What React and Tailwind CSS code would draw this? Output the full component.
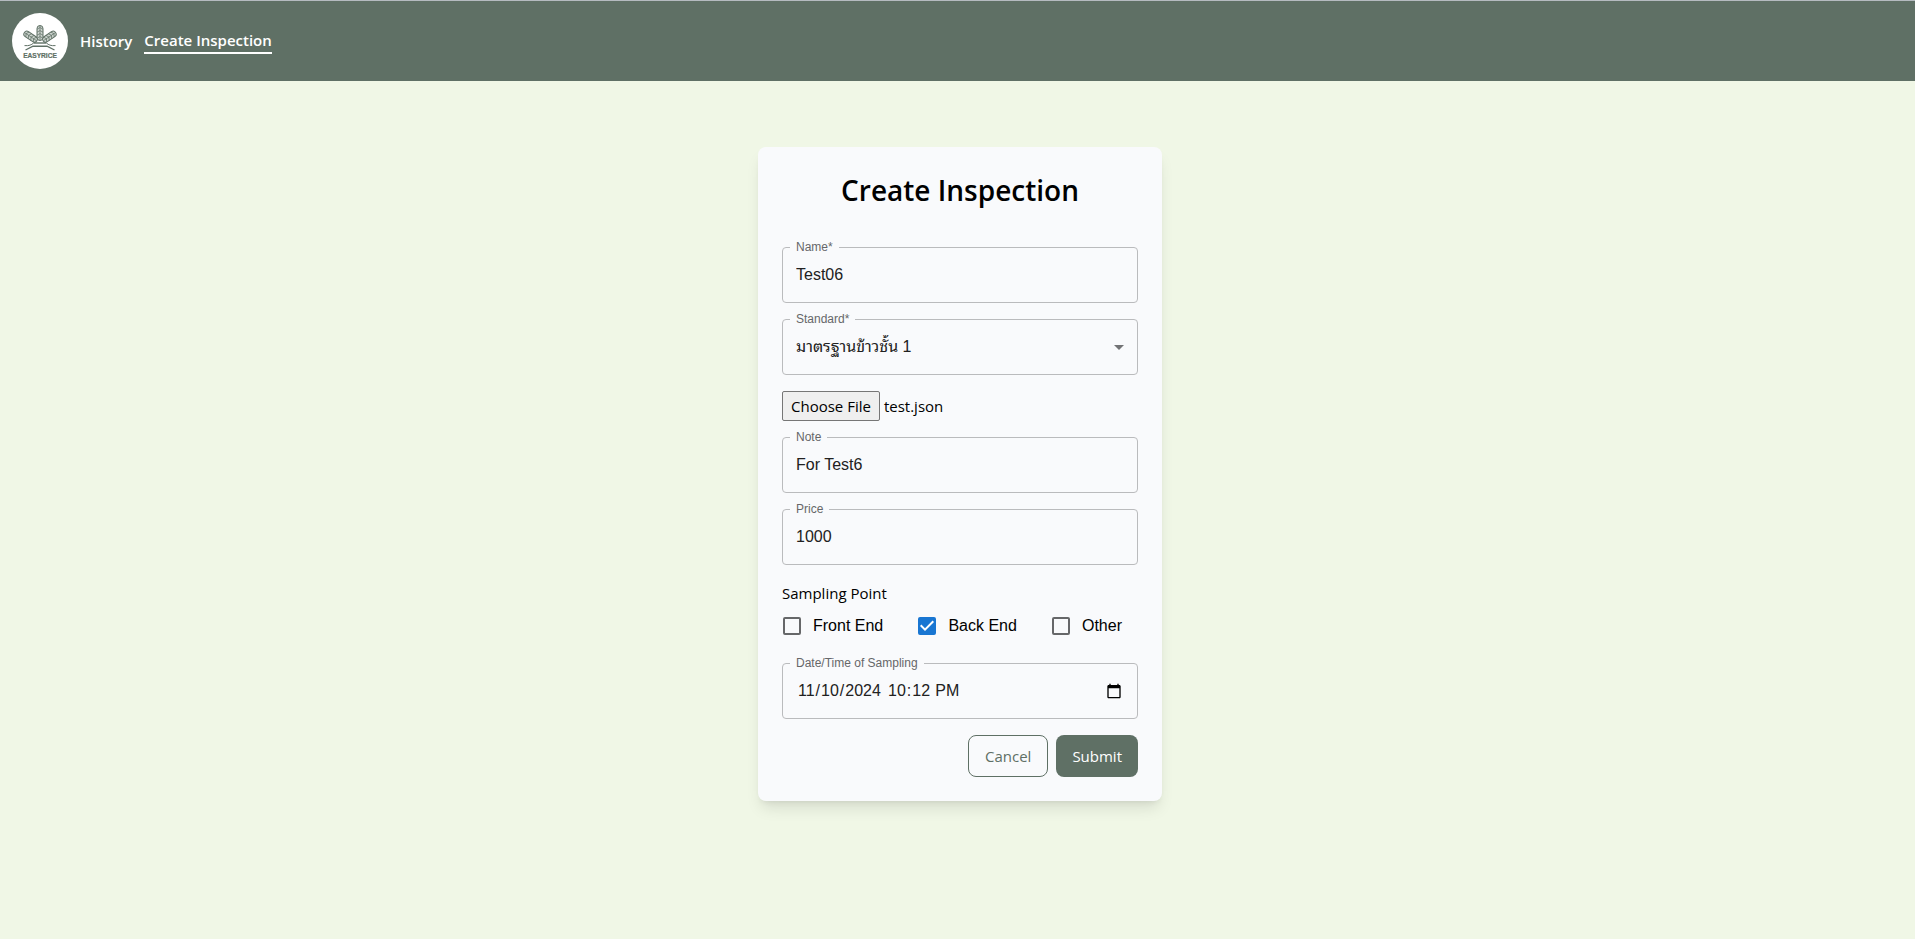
import { useEffect, useRef, useState } from "react";

function Ear({ transform }) {
  return (
    <g transform={transform} fill="none" stroke="#5f7065" strokeWidth="0.7">
      <rect x="-3" y="-14.5" width="6" height="15" rx="3" fill="#ccd3ce" strokeWidth="1" />
      <path d="M0 -14V0M-3 -10.8L0 -12.4L3 -10.8M-3 -7.8L0 -9.4L3 -7.8M-3 -4.8L0 -6.4L3 -4.8M-3 -1.8L0 -3.4L3 -1.8" />
    </g>
  );
}

function Logo() {
  return (
    <svg viewBox="0 0 56 56" className="size-14 shrink-0" role="img" aria-label="Easyrice">
      <circle cx="28" cy="28" r="28" fill="#fff" />
      <Ear transform="translate(24.4 27.6) rotate(-56)" />
      <Ear transform="translate(31.6 27.6) rotate(56)" />
      <Ear transform="translate(28 27)" />
      <g fill="none" stroke="#5f7065">
        <path d="M21.5 30H34.5" strokeWidth="1.4" />
        <path d="M12.5 32.6C17 33 19.5 32 21.5 30M43.5 32.6C39 33 36.5 32 34.5 30" strokeWidth="1" />
        <path d="M13.5 37L21 33.2H35L42.5 37" strokeWidth="1.4" />
      </g>
      <text
        x="28"
        y="44.6"
        textAnchor="middle"
        fontSize="6.6"
        stroke="#5f7065"
        strokeWidth="0.2"
        className="fill-[#5f7065] font-['Liberation_Sans',sans-serif] font-bold"
      >
        EASYRICE
      </text>
    </svg>
  );
}

function Field({ id, label, children }) {
  return (
    <div className="relative">
      <label
        htmlFor={id}
        className="absolute -top-2 left-2 bg-[#f9fafc] px-1.5 font-['Liberation_Sans',sans-serif] text-xs leading-4 text-[#666769]"
      >
        {label}
      </label>
      {children}
    </div>
  );
}

const control =
  "block h-14 w-full rounded border border-[#babbbd] bg-transparent px-[13px] font-['Liberation_Sans','Noto_Sans_Thai_Looped',Loma,Waree,Garuda,'Noto_Sans_Thai',sans-serif] text-base text-[#212121] outline-none focus:border-[#1976d2]";

function FileInput() {
  const ref = useRef(null);
  useEffect(() => {
    const transfer = new DataTransfer();
    transfer.items.add(new File(["{}"], "test.json", { type: "application/json" }));
    ref.current.files = transfer.files;
  }, []);
  return (
    <input
      ref={ref}
      type="file"
      accept=".json"
      aria-label="Inspection file"
      className="block w-full text-[15px] leading-6 file:mr-1 file:rounded-xs file:border file:border-solid file:border-[#767676] file:bg-[#efefef] file:px-2 file:py-0.5 file:text-black"
    />
  );
}

function DateTimeInput({ id }) {
  const date = useRef(null);
  return (
    <div className="flex h-14 items-center rounded border border-[#babbbd] pr-[15px] pl-3.5 font-['Liberation_Sans',sans-serif] text-base text-[#212121]">
      <input
        ref={date}
        id={id}
        type="date"
        defaultValue="2024-11-10"
        className="w-[90px] outline-none [&::-webkit-calendar-picker-indicator]:hidden"
      />
      <input
        type="time"
        aria-label="Time of sampling"
        defaultValue="22:12"
        className="outline-none [&::-webkit-calendar-picker-indicator]:hidden"
      />
      <button type="button" aria-label="Open calendar" className="ml-auto" onClick={() => date.current.showPicker()}>
        <svg viewBox="0 0 24 24" className="size-4 fill-black">
          <path d="M20 3h-1V1h-2v2H7V1H5v2H4c-1.1 0-2 .9-2 2v16c0 1.1.9 2 2 2h16c1.1 0 2-.9 2-2V5c0-1.1-.9-2-2-2zm0 18H4V8h16v13z" />
        </svg>
      </button>
    </div>
  );
}

function Check({ label, checked, onChange }) {
  return (
    <label className="flex h-[42px] cursor-pointer items-center gap-3 pl-px font-['Liberation_Sans',sans-serif] text-base">
      <span className="relative flex size-[18px]">
        <input
          type="checkbox"
          checked={checked}
          onChange={onChange}
          className="size-[18px] appearance-none rounded-xs border-2 border-[#666769] checked:border-[#1976d2] checked:bg-[#1976d2]"
        />
        {checked && (
          <svg viewBox="3 3 18 18" className="pointer-events-none absolute inset-0 size-[18px] fill-white">
            <path d="M10 17l-5-5 1.41-1.41L10 14.17l7.59-7.59L19 8l-9 9z" />
          </svg>
        )}
      </span>
      {label}
    </label>
  );
}

export default function App() {
  const [points, setPoints] = useState({ "Front End": false, "Back End": true, Other: false });
  const toggle = (name) => setPoints((p) => ({ ...p, [name]: !p[name] }));

  return (
    <div className="min-h-screen bg-[#f0f7e6] font-['Open_Sans','Noto_Sans',sans-serif] text-black">
      <nav className="flex items-center gap-3 border-t border-[#b5bbc0] bg-[#5f7065] p-3 text-[15px] leading-6 font-semibold text-white">
        <Logo />
        <a href="#history">History</a>
        <a href="#create" className="border-b-2 border-white">
          Create Inspection
        </a>
      </nav>

      <main className="flex justify-center pt-[66px] pb-16 pl-[5px]">
        <form
          className="flex w-full max-w-[404px] flex-col gap-4 rounded-lg bg-[#f9fafc] p-6 shadow-lg"
          onSubmit={(e) => e.preventDefault()}
        >
          <h1 className="mb-[22px] text-center text-[28px] leading-[38px] font-semibold">Create Inspection</h1>

          <Field id="name" label="Name*">
            <input id="name" type="text" defaultValue="Test06" className={control} />
          </Field>

          <Field id="standard" label="Standard*">
            <select id="standard" lang="th" defaultValue="1" className={`${control} appearance-none`}>
              <option value="1">มาตรฐานข้าวชั้น 1</option>
              <option value="2">มาตรฐานข้าวชั้น 2</option>
            </select>
            <svg viewBox="0 0 24 24" className="pointer-events-none absolute top-4 right-[7px] size-6 fill-[#727375]">
              <path d="M7 10l5 5 5-5z" />
            </svg>
          </Field>

          <FileInput />

          <Field id="note" label="Note">
            <input id="note" type="text" defaultValue="For Test6" className={control} />
          </Field>

          <Field id="price" label="Price">
            <input id="price" type="text" inputMode="numeric" defaultValue="1000" className={control} />
          </Field>

          <fieldset>
            <legend className="text-[15px] leading-6">Sampling Point</legend>
            <div className="flex justify-between pr-4">
              {Object.keys(points).map((name) => (
                <Check key={name} label={name} checked={points[name]} onChange={() => toggle(name)} />
              ))}
            </div>
          </fieldset>

          <Field id="sampled" label="Date/Time of Sampling">
            <DateTimeInput id="sampled" />
          </Field>

          <div className="flex justify-end gap-2 text-[15px] leading-6">
            <button type="button" className="rounded-lg border border-[#5f7065] px-4 py-2 text-[#5f7065]">
              Cancel
            </button>
            <button type="submit" className="rounded-lg bg-[#5f7065] px-4 py-2 text-white">
              Submit
            </button>
          </div>
        </form>
      </main>
    </div>
  );
}
